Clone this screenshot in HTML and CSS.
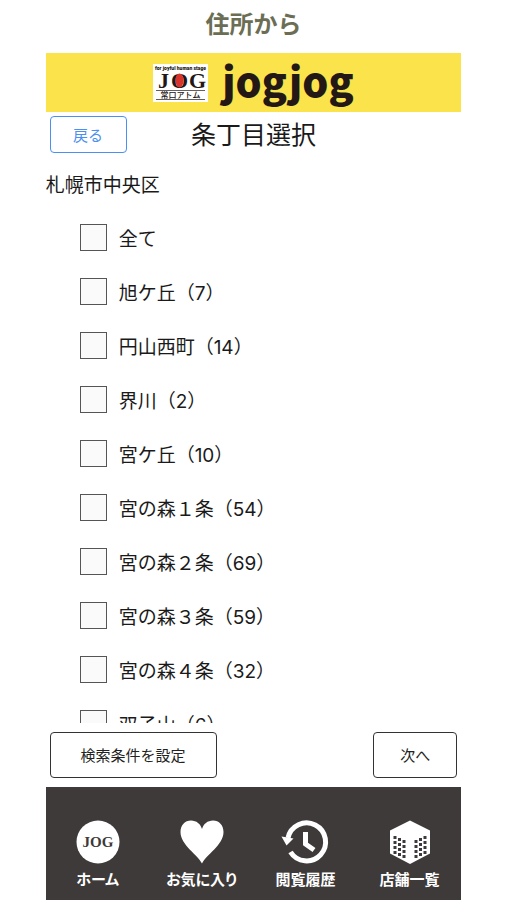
FILE: index.html
```html
<!DOCTYPE html>
<html lang="ja">
<head>
<meta charset="utf-8">
<meta name="viewport" content="width=device-width, initial-scale=1">
<title>住所から</title>
<link rel="stylesheet" href="styles.css">
</head>
<body>
<h1 class="headline">住所から</h1>
<div class="app">
  <header class="brand">
    <svg class="brand-logo" viewBox="0 0 55 38" role="img" aria-label="JOG 常口アトム">
      <rect width="55" height="38" fill="#fff"/>
      <text class="logo-tag" x="27.5" y="6" text-anchor="middle">for joyful human stage</text>
      <text class="logo-jog" x="5" y="24">J</text>
      <text class="logo-jog" x="18" y="24">O</text>
      <text class="logo-jog" x="36" y="24">G</text>
      <ellipse cx="26.500" cy="16.500" rx="4" ry="7" fill="#d9342b"/>
      <path d="M3 26.500H52M3 35.500H52" stroke="#231815" stroke-width=".7"/>
      <text class="logo-name" x="27.5" y="34" text-anchor="middle">常口アトム</text>
    </svg>
    <span class="brand-name">jogjog</span>
  </header>
  <div class="titlebar">
    <button class="back" type="button">戻る</button>
    <h2 class="title">条丁目選択</h2>
  </div>
  <p class="area">札幌市中央区</p>
  <div class="list">
    <label class="row"><input type="checkbox"><span>全て</span></label>
    <label class="row"><input type="checkbox"><span>旭ケ丘（<span class="count">7</span>）</span></label>
    <label class="row"><input type="checkbox"><span>円山西町（<span class="count">14</span>）</span></label>
    <label class="row"><input type="checkbox"><span>界川（<span class="count">2</span>）</span></label>
    <label class="row"><input type="checkbox"><span>宮ケ丘（<span class="count">10</span>）</span></label>
    <label class="row"><input type="checkbox"><span>宮の森１条（<span class="count">54</span>）</span></label>
    <label class="row"><input type="checkbox"><span>宮の森２条（<span class="count">69</span>）</span></label>
    <label class="row"><input type="checkbox"><span>宮の森３条（<span class="count">59</span>）</span></label>
    <label class="row"><input type="checkbox"><span>宮の森４条（<span class="count">32</span>）</span></label>
    <label class="row"><input type="checkbox"><span>双子山（<span class="count">6</span>）</span></label>
  </div>
  <div class="actions">
    <button class="action" type="button">検索条件を設定</button>
    <button class="action action-next" type="button">次へ</button>
  </div>
  <nav class="tabs">
    <a class="tab" href="#home">
      <svg class="tab-icon" viewBox="0 0 44 44" aria-hidden="true">
        <circle cx="22" cy="22" r="21.500" fill="#fff"/>
        <text class="tab-jog" x="22" y="27" text-anchor="middle">JOG</text>
      </svg>
      <span>ホーム</span>
    </a>
    <a class="tab" href="#favorites">
      <svg class="tab-icon" viewBox="0 0 44 44" aria-hidden="true">
        <path d="M22 43.500C18 35 .5 25 .5 12C.5 5 5 .5 11 .5C16.500 .5 20.500 4 22 9C23.500 4 27.500 .5 33 .5C39 .5 43.500 5 43.500 12C43.500 25 26 35 22 43.500Z" fill="#fff"/>
      </svg>
      <span>お気に入り</span>
    </a>
    <a class="tab" href="#history">
      <svg class="tab-icon" viewBox="0 0 44 44" aria-hidden="true">
        <path d="M5 18A19 19 0 1 1 7.500 32" fill="none" stroke="#fff" stroke-width="5"/>
        <path d="M-1.500 16.500L10.500 18.500L3.500 25.500Z" fill="#fff"/>
        <path d="M22.500 12V24L31 30" fill="none" stroke="#fff" stroke-width="5"/>
      </svg>
      <span>閲覧履歴</span>
    </a>
    <a class="tab" href="#shops">
      <svg class="tab-icon" viewBox="0 0 44 44" aria-hidden="true">
        <path d="M23 .5L43 10.500V33.500L23 44L3 33.500V10.500Z" fill="#fff"/>
        <g fill="none" stroke="#3e3a39" stroke-width="3" stroke-dasharray="3 2">
          <path d="M8 16V34M12.500 18V36M17 20V38M29 20V38M33.500 18V36M38 16V34"/>
        </g>
      </svg>
      <span>店舗一覧</span>
    </a>
  </nav>
</div>
</body>
</html>
```

FILE: styles.css
```css
* {
  box-sizing: border-box;
}

body {
  display: flex;
  flex-direction: column;
  height: 100vh;
  margin: 0;
  padding: 0 9%;
  background: #fff;
  color: #1a1a1a;
  font-family: "Noto Sans CJK JP", sans-serif;
}

h1,
h2,
p {
  margin: 0;
}

button {
  background: #fff;
  font-family: inherit;
}

.headline {
  padding: 4px 0 12px;
  color: #6b6e55;
  font-size: 24px;
  line-height: 37px;
  font-weight: 700;
  text-align: center;
}

.app {
  display: flex;
  flex: 1;
  flex-direction: column;
  min-height: 0;
}

.brand {
  display: flex;
  align-items: center;
  justify-content: center;
  gap: 14px;
  height: 59px;
  background: #fae34b;
}

.brand-logo {
  width: 55px;
  height: 38px;
}

.logo-tag {
  font: 900 5px Roboto, sans-serif;
  fill: #231815;
}

.logo-jog {
  font: 700 22px "Liberation Serif", serif;
  fill: #231815;
}

.logo-name {
  font: 500 8px "Noto Sans CJK JP", sans-serif;
  fill: #231815;
}

.brand-name {
  padding-bottom: 6px;
  color: #231815;
  font: 900 41px/53px "Noto Sans CJK JP", sans-serif;
}

.titlebar {
  display: grid;
  grid-template-columns: 1fr auto 1fr;
  align-items: center;
  padding: 4px;
}

.back {
  width: 77px;
  height: 37px;
  padding: 0;
  border: 1px solid #4a90f0;
  border-radius: 4px;
  color: #4a90f0;
  font-size: 15px;
}

.title {
  padding-bottom: 3px;
  font-size: 25px;
  line-height: 34px;
  font-weight: 400;
}

.area {
  padding: 11px 0 10px;
  font-size: 19px;
  line-height: 32px;
}

.list {
  flex: 1;
  min-height: 0;
  padding-left: 34px;
  overflow: hidden;
}

.row {
  display: flex;
  align-items: center;
  gap: 12px;
  height: 54px;
  font-size: 19px;
}

.row input {
  width: 27px;
  height: 27px;
  margin: 0;
  border: 1px solid #555;
  background: #fafafa;
  appearance: none;
}

.count {
  font-family: Inter, sans-serif;
}

.actions {
  display: flex;
  justify-content: space-between;
  padding: 9px 4px;
}

.action {
  width: 167px;
  height: 46px;
  padding: 0 0 2px;
  border: 1px solid #333;
  border-radius: 4px;
  color: #222;
  font-size: 15px;
}

.action-next {
  width: 84px;
}

.tabs {
  display: grid;
  grid-template-columns: repeat(4, 1fr);
  height: 113px;
  padding-top: 33px;
  background: #3e3a39;
}

.tab {
  display: flex;
  flex-direction: column;
  align-items: center;
  gap: 4px;
  color: #fff;
  font-size: 15px;
  font-feature-settings: "palt";
  line-height: 22px;
  font-weight: 700;
  text-decoration: none;
  white-space: nowrap;
}

.tab-icon {
  width: 44px;
  height: 44px;
  overflow: visible;
}

.tab-jog {
  font: 700 15px "Liberation Serif", serif;
  fill: #3e3a39;
}
```
